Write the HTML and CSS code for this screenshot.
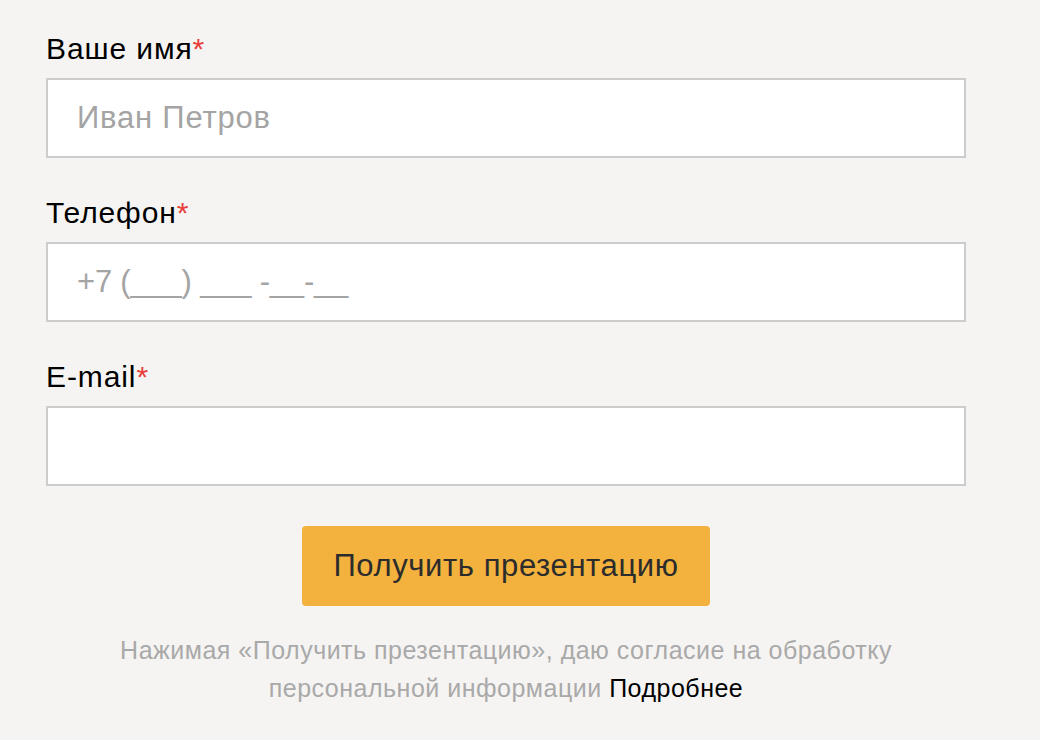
FILE: index.html
```html
<!DOCTYPE html>
<html lang="ru">
<head>
<meta charset="utf-8">
<title>Получить презентацию</title>
<link rel="stylesheet" href="styles.css">
</head>
<body>
<form class="lead-form">
  <div class="field">
    <label class="field-label" for="name">Ваше имя<span class="req">*</span></label>
    <input class="field-input" id="name" type="text" placeholder="Иван Петров">
  </div>
  <div class="field">
    <label class="field-label" for="phone">Телефон<span class="req">*</span></label>
    <input class="field-input field-input--phone" id="phone" type="tel" placeholder="+7 (___) ___ -__-__">
  </div>
  <div class="field">
    <label class="field-label" for="email">E-mail<span class="req">*</span></label>
    <input class="field-input" id="email" type="email">
  </div>
  <div class="actions">
    <button class="submit" type="button">Получить презентацию</button>
  </div>
  <p class="consent">Нажимая «Получить презентацию», даю согласие на обработку персональной информации <a class="more" href="#">Подробнее</a></p>
</form>
</body>
</html>
```
FILE: styles.css
```css
html, body {
  margin: 0;
  padding: 0;
  background: #f5f4f2;
}

body {
  font-family: "Liberation Sans", Arial, sans-serif;
  color: #000;
}

.lead-form {
  width: 920px;
  margin-left: 46px;
  padding-top: 30px;
}

.field {
  display: flex;
  flex-direction: column;
  margin-bottom: 36px;
}

.field-label {
  font-size: 30px;
  letter-spacing: 0.9px;
  line-height: 38px;
  margin-bottom: 10px;
}

.req {
  color: #e8403a;
}

.field-input {
  box-sizing: border-box;
  height: 80px;
  width: 100%;
  border: 2px solid #cccccc;
  background: #fff;
  padding: 0 29px;
  font-family: "Liberation Sans", Arial, sans-serif;
  font-size: 31px;
  letter-spacing: 0.8px;
  color: #333;
  outline: none;
  border-radius: 0;
}

.field-input--phone {
  letter-spacing: -0.2px;
}

.field-input::placeholder {
  color: #a4a4a4;
}

.actions {
  display: flex;
  justify-content: center;
  margin-top: 40px;
}

.submit {
  width: 408px;
  height: 80px;
  border: none;
  border-radius: 4px;
  background: #f3b23e;
  color: #2c2c2c;
  font-family: "Liberation Sans", Arial, sans-serif;
  font-size: 31px;
  letter-spacing: 0.6px;
  cursor: pointer;
}

.consent {
  margin: 25px auto 0;
  width: 840px;
  text-align: center;
  font-size: 25px;
  letter-spacing: 0.5px;
  line-height: 38px;
  color: #a9a9a9;
}

.more {
  color: #000;
  text-decoration: none;
}
```
